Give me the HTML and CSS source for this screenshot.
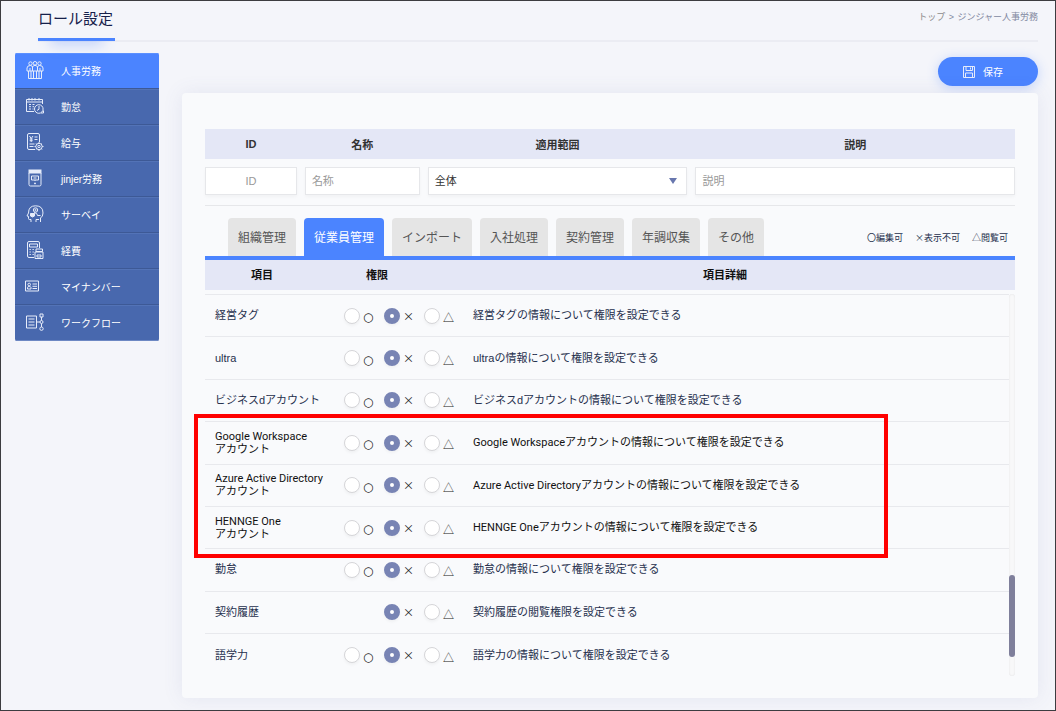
FILE: index.html
```html
<!DOCTYPE html>
<html lang="ja">
<head>
    <meta charset="UTF-8">
    <meta name="viewport" content="width=device-width, initial-scale=1.0">
    <title>ロール設定</title>
    <link rel="stylesheet" href="styles.css">
</head>
<body>
    <header class="header">
        <h1 class="title">ロール設定</h1>
        <nav class="breadcrumb"><a href="#">トップ</a> &gt; <span>ジンジャー人事労務</span></nav>
    </header>

    <div class="layout">
        <nav class="sidebar">
            <a href="#" class="menu active">
                <svg class="icon" viewBox="0 0 18 18"><circle cx="4.500" cy="2.500" r="1.700"/><circle cx="9" cy="2.300" r="1.800"/><circle cx="13.500" cy="2.500" r="1.700"/><path d="M1 10V7q0-2.500 3.500-2.500Q6 4.500 6.500 6Q7 4.400 9 4.400T11.500 6q.5-1.500 2-1.500Q17 4.500 17 7v3M1 10h16M6.500 6v4M11.500 6v4M4 7v3M14 7v3M2.500 10v7.500h13V10M5 10v7.500M7.500 10v7.500M10.500 10v7.500M13 10v7.500"/></svg>
                人事労務
            </a>
            <a href="#" class="menu">
                <svg class="icon" viewBox="0 0 18 18"><path d="M8 14.500H.5v-12H16.500V7M.5 5h16M3 1v2.500M6 1v2.500M9 1v2.500M13 1v2.500M3 7.500h2M6.500 7.500h2M3 9.700h2M6.500 9.700h1.500M3 12h2M6.500 12h1M13 9v3.200l-2 1.300M15 16h2.500v-2.500"/><circle cx="12.800" cy="12" r="4.300"/></svg>
                勤怠
            </a>
            <a href="#" class="menu">
                <svg class="icon" viewBox="0 0 18 18"><path d="M9 16.500H3q-1.500 0-1.500-1.500V2Q1.500.5 3 .5h9q1.500 0 1.500 1.500v7M3.500 3l1.700 2.500L7 3M5.200 5.500V9M3.700 6h3M3.700 7.700h3M8.500 4h3M8.500 6.500h3M3.500 11h5M3.500 13.500h4"/><circle cx="13" cy="13.500" r="3.200"/><circle cx="13" cy="13.500" r="1.200"/><path d="M13 9v1.300M13 16.700V18M8.500 13.500h1.300M16.200 13.500h1.300M10 10.500l.8.800M15.200 15.700l.8.800M16 10.500l-.8.800M10.800 15.700l-.8.800"/></svg>
                給与
            </a>
            <a href="#" class="menu">
                <svg class="icon" viewBox="0 0 18 18"><rect x="3" y="1" width="12" height="3" fill="currentColor"/><path d="M3 4v11.500q0 1.500 1.500 1.500h9q1.500 0 1.500-1.500V4M5.500 7h7v4h-7zM7.500 9h3M9 11v1M8.500 14h1v.8h-1z"/></svg>
                jinjer労務
            </a>
            <a href="#" class="menu">
                <svg class="icon" viewBox="0 0 18 18"><path d="M5 17v-2.500H3.500q-1 0-1-1v-2.200L1 11l1.500-3Q2.500.8 9.500.8 17 .8 17 8q0 3.500-2.500 5v4M10 17v-2.500h3M8 7.500q3.500.5 3.500 3h3"/><path d="M4.500 8.500h4V11l-2 1-2-1z" fill="currentColor"/><circle cx="9.500" cy="5" r="2.200"/><circle cx="9.500" cy="5" r=".7"/></svg>
                サーベイ
            </a>
            <a href="#" class="menu">
                <svg class="icon" viewBox="0 0 18 18"><path d="M8 16.500H3q-1.500 0-1.500-1.500V2Q1.500.5 3 .5h9q1.500 0 1.500 1.500v5M3.500 3h8v3h-8zM3.500 8.500h1.300M6.500 8.500h1.300M3.500 11h1.300M6.500 11h1.300M3.500 13.500h1.300M6.500 13.500h1.300M10 8h6.500v2.500H10zM9 11h8v6.500H9zM11 14h4v2h-4z"/></svg>
                経費
            </a>
            <a href="#" class="menu">
                <svg class="icon" viewBox="0 0 18 18"><path d="M-.5 4h13v10H-.5zM1.500 12v-1.500q0-1 1.700-1t1.800 1V12zM6.500 7h4.500M6.500 9.300h4.500M6.500 11.500h4.500"/><circle cx="3.200" cy="7.500" r="1.300"/></svg>
                マイナンバー
            </a>
            <a href="#" class="menu">
                <svg class="icon" viewBox="0 0 18 18"><path d="M.5 3h10v12H.5zM2.500 6h6M2.500 9h6M2.500 12h6M10.500 9H14M15.500 4v3.500M15.500 10.500V14M14 1h3v3h-3z"/><circle cx="15.500" cy="9" r="1.500"/><circle cx="15.500" cy="15.700" r="1.700"/></svg>
                ワークフロー
            </a>
        </nav>

        <main class="content">
            <div class="toolbar">
                <button type="button" class="btn-save">
                    <svg class="icon-save" viewBox="0 0 12 12"><path d="M.5.5h11v11H.5zM3 .5v4h6.500v-4M7.500 1.500v2M2.500 11.500V7h7v4.500"/></svg>
                    保存
                </button>
            </div>

            <div class="panel">
                <div class="filter filter-head">
                    <label for="role-id">ID</label>
                    <label for="role-name">名称</label>
                    <label for="role-scope">適用範囲</label>
                    <label for="role-desc">説明</label>
                </div>
                <div class="filter filter-body">
                    <input type="text" id="role-id" class="field center" placeholder="ID">
                    <input type="text" id="role-name" class="field" placeholder="名称">
                    <select id="role-scope" class="field select">
                        <option>全体</option>
                    </select>
                    <input type="text" id="role-desc" class="field" placeholder="説明">
                </div>

                <div class="tab-bar">
                    <div class="tabs">
                        <button type="button" class="tab">組織管理</button>
                        <button type="button" class="tab active">従業員管理</button>
                        <button type="button" class="tab">インポート</button>
                        <button type="button" class="tab">入社処理</button>
                        <button type="button" class="tab">契約管理</button>
                        <button type="button" class="tab">年調収集</button>
                        <button type="button" class="tab">その他</button>
                    </div>
                    <div class="legend">
                        <span>〇編集可</span>
                        <span>×表示不可</span>
                        <span>△閲覧可</span>
                    </div>
                </div>

                <div class="list-head">
                    <span>項目</span>
                    <span>権限</span>
                    <span>項目詳細</span>
                </div>

                <div class="list">
                    <table class="roles">
                        <tr>
                            <td class="name">経営タグ</td>
                            <td class="auth"><div class="options">
                                <label><input type="radio" name="r1"><span class="circle">○</span></label>
                                <label><input type="radio" name="r1" checked><span>×</span></label>
                                <label><input type="radio" name="r1"><span class="triangle">△</span></label>
                            </div></td>
                            <td>経営タグの情報について権限を設定できる</td>
                        </tr>
                        <tr>
                            <td class="name">ultra</td>
                            <td class="auth"><div class="options">
                                <label><input type="radio" name="r2"><span class="circle">○</span></label>
                                <label><input type="radio" name="r2" checked><span>×</span></label>
                                <label><input type="radio" name="r2"><span class="triangle">△</span></label>
                            </div></td>
                            <td>ultraの情報について権限を設定できる</td>
                        </tr>
                        <tr>
                            <td class="name">ビジネスdアカウント</td>
                            <td class="auth"><div class="options">
                                <label><input type="radio" name="r3"><span class="circle">○</span></label>
                                <label><input type="radio" name="r3" checked><span>×</span></label>
                                <label><input type="radio" name="r3"><span class="triangle">△</span></label>
                            </div></td>
                            <td>ビジネスdアカウントの情報について権限を設定できる</td>
                        </tr>
                        <tr class="account">
                            <td class="name">Google Workspace<br>アカウント</td>
                            <td class="auth"><div class="options">
                                <label><input type="radio" name="r4"><span class="circle">○</span></label>
                                <label><input type="radio" name="r4" checked><span>×</span></label>
                                <label><input type="radio" name="r4"><span class="triangle">△</span></label>
                            </div></td>
                            <td>Google Workspaceアカウントの情報について権限を設定できる</td>
                        </tr>
                        <tr class="account">
                            <td class="name">Azure Active Directory<br>アカウント</td>
                            <td class="auth"><div class="options">
                                <label><input type="radio" name="r5"><span class="circle">○</span></label>
                                <label><input type="radio" name="r5" checked><span>×</span></label>
                                <label><input type="radio" name="r5"><span class="triangle">△</span></label>
                            </div></td>
                            <td>Azure Active Directoryアカウントの情報について権限を設定できる</td>
                        </tr>
                        <tr class="account">
                            <td class="name">HENNGE One<br>アカウント</td>
                            <td class="auth"><div class="options">
                                <label><input type="radio" name="r6"><span class="circle">○</span></label>
                                <label><input type="radio" name="r6" checked><span>×</span></label>
                                <label><input type="radio" name="r6"><span class="triangle">△</span></label>
                            </div></td>
                            <td>HENNGE Oneアカウントの情報について権限を設定できる</td>
                        </tr>
                        <tr>
                            <td class="name">勤怠</td>
                            <td class="auth"><div class="options">
                                <label><input type="radio" name="r7"><span class="circle">○</span></label>
                                <label><input type="radio" name="r7" checked><span>×</span></label>
                                <label><input type="radio" name="r7"><span class="triangle">△</span></label>
                            </div></td>
                            <td>勤怠の情報について権限を設定できる</td>
                        </tr>
                        <tr>
                            <td class="name">契約履歴</td>
                            <td class="auth"><div class="options view-only">
                                <label><input type="radio" name="r8" checked><span>×</span></label>
                                <label><input type="radio" name="r8"><span class="triangle">△</span></label>
                            </div></td>
                            <td>契約履歴の閲覧権限を設定できる</td>
                        </tr>
                        <tr>
                            <td class="name">語学力</td>
                            <td class="auth"><div class="options">
                                <label><input type="radio" name="r9"><span class="circle">○</span></label>
                                <label><input type="radio" name="r9" checked><span>×</span></label>
                                <label><input type="radio" name="r9"><span class="triangle">△</span></label>
                            </div></td>
                            <td>語学力の情報について権限を設定できる</td>
                        </tr>
                    </table>
                    <div class="scrollbar"><div class="thumb"></div></div>
                    <div class="highlight"></div>
                </div>
            </div>
        </main>
    </div>
</body>
</html>
```

FILE: styles.css
```css
*{
    margin: 0;
    padding: 0;
    box-sizing: border-box;
}
body{
    min-height: 100vh;
    display: flex;
    flex-direction: column;
    border: 1px solid #3c3c40;
    background-color: #f4f5fa;
    color: #26304d;
    font-family: "Liberation Sans", "Noto Sans CJK JP", sans-serif;
    font-size: 11px;
}
a{
    color: inherit;
    text-decoration: none;
}
button, input, select{
    font: inherit;
}

/* header */
.header{
    display: flex;
    justify-content: space-between;
    height: 41px;
    margin: 0 17px 0 37px;
    border-bottom: 2px solid #ebecf3;
}
.title{
    height: 40px;
    padding-right: 2px;
    line-height: 36px;
    font-size: 15px;
    font-weight: 400;
    color: #16204a;
    border-bottom: 3px solid #4b84ff;
    box-shadow: 0 16px 14px -12px rgba(75, 132, 255, 0.3);
    position: relative;
}
.breadcrumb{
    line-height: 32px;
    font-size: 9px;
    color: #8288a0;
    word-spacing: 1px;
}
.breadcrumb a{
    color: #8c8c8c;
}

.layout{
    flex: 1;
    display: flex;
    align-items: stretch;
    gap: 23px;
    padding: 11px 17px 12px 14px;
}

/* sidebar */
.sidebar{
    width: 144px;
    align-self: flex-start;
    border-radius: 2px;
    overflow: hidden;
}
.menu{
    display: flex;
    align-items: center;
    gap: 17px;
    height: 36px;
    padding: 0 0 2px 11px;
    font-size: 10px;
    color: #fff;
    background-color: #4868ae;
    border-top: 1px solid #5373b7;
    border-bottom: 1px solid #3d5996;
}
.menu.active{
    background-color: #4b84ff;
    border-top-color: #5b90ff;
}
.menu:last-child{
    border-bottom-color: #6d88c3;
}
.icon{
    width: 18px;
    height: 18px;
    fill: none;
    stroke: #e6ecfa;
    stroke-width: 1;
    color: #e6ecfa;
    overflow: visible;
}

/* content */
.content{
    flex: 1;
    display: flex;
    flex-direction: column;
}
.toolbar{
    display: flex;
    justify-content: flex-end;
    padding: 4px 0 7px;
}
.btn-save{
    display: flex;
    align-items: center;
    justify-content: center;
    gap: 8px;
    width: 100px;
    height: 29px;
    padding-right: 10px;
    border: none;
    border-radius: 15px;
    font-size: 10px;
    color: #fff;
    background-color: #4b84ff;
    box-shadow: 0 2px 12px rgba(75, 132, 255, 0.3);
}
.icon-save{
    width: 12px;
    height: 12px;
    fill: none;
    stroke: #e6ecfa;
}
.panel{
    flex: 1;
    display: flex;
    flex-direction: column;
    padding: 36px 23px 22px;
    border-radius: 4px;
    background-color: #f9fafc;
    box-shadow: 0 0 20px rgba(90, 100, 160, 0.1);
}

/* search row */
.filter{
    display: grid;
    grid-template-columns: 92fr 115fr 260fr 320fr;
    gap: 8px;
}
.filter-head{
    height: 30px;
    align-items: center;
    text-align: center;
    font-weight: 700;
    color: #333;
    background-color: #e4e7f6;
}
.filter-body{
    padding: 8px 0 10px;
    border-bottom: 1px solid #e6e7ea;
}
.field{
    width: 100%;
    height: 28px;
    padding: 0 6px;
    border: 1px solid #e6e7ea;
    color: #333;
    background-color: #fff;
    box-shadow: 0 2px 3px rgba(0, 0, 0, 0.03);
}
.field::placeholder{
    color: #999;
}
.center{
    text-align: center;
}
.select{
    appearance: none;
    background-image: url("data:image/svg+xml,%3Csvg xmlns='http://www.w3.org/2000/svg' width='8' height='6'%3E%3Cpath d='M0 0h8L4 6z' fill='%236877ae'/%3E%3C/svg%3E");
    background-repeat: no-repeat;
    background-position: right 9px center;
}

/* tabs */
.tab-bar{
    display: flex;
    justify-content: space-between;
    padding: 12px 7px 0 23px;
    border-bottom: 4px solid #4b84ff;
    border-radius: 0 2px 0 0;
}
.tabs{
    display: flex;
    gap: 8px;
}
.tab{
    height: 38px;
    padding: 0 10px 2px;
    border: none;
    border-radius: 4px 4px 0 0;
    font-size: 12px;
    color: #555;
    background-color: #e5e5e5;
}
.tab.active{
    color: #fff;
    background-color: #4b84ff;
}
.legend{
    display: flex;
    align-items: center;
    gap: 12px;
    font-family: "Noto Sans CJK JP", sans-serif;
    font-size: 9px;
}

/* role list */
.list-head{
    display: grid;
    grid-template-columns: 114px 116px 1fr;
    align-items: center;
    height: 30px;
    margin-bottom: 4px;
    padding-bottom: 2px;
    text-align: center;
    font-weight: 700;
    color: #111;
    background-color: #e4e7f6;
}
.list{
    flex: 1;
    display: flex;
    min-height: 382px;
    position: relative;
}
.roles{
    flex: 1;
    border-collapse: collapse;
    table-layout: fixed;
}
.roles td{
    height: 42px;
    border-top: 1px solid #e8e9ed;
    line-height: 13px;
    vertical-align: middle;
}
.roles .name{
    width: 139px;
    padding-left: 10px;
    white-space: nowrap;
}
.roles .auth{
    width: 129px;
}
.roles .account{
    font-family: Roboto, "Noto Sans CJK JP", sans-serif;
    color: #111;
}
.options{
    display: grid;
    grid-template-columns: repeat(3, 40px);
}
.options label{
    display: flex;
    align-items: center;
    gap: 3px;
    height: 16px;
    font-family: "Noto Sans CJK JP", sans-serif;
    line-height: 16px;
    color: #222;
}
.view-only label:first-child{
    grid-column: 2;
}
.circle, .triangle{
    padding-top: 3px;
}
.circle{
    font-family: "DejaVu Sans", sans-serif;
    font-size: 12px;
}
.options input{
    appearance: none;
    width: 16px;
    height: 16px;
    border: 1px solid #d5d5d8;
    border-radius: 50%;
    background-color: #fff;
    box-shadow: 0 2px 3px rgba(0, 0, 0, 0.04);
}
.options input:checked{
    border: 6px solid #7884b4;
}
.scrollbar{
    display: flex;
    flex-direction: column;
    justify-content: flex-end;
    width: 6px;
    padding-bottom: 19px;
    border-radius: 3px;
    background-color: #f8f8f9;
    box-shadow: inset 0 0 2px rgba(0, 0, 0, 0.1);
}
.thumb{
    height: 82px;
    border-radius: 3px;
    background-color: #7f7f9b;
}

/* frame around the account rows */
.highlight{
    position: absolute;
    top: 120px;
    left: -11px;
    width: 694px;
    height: 144px;
    border: 4px solid #ff0000;
    pointer-events: none;
}
```
